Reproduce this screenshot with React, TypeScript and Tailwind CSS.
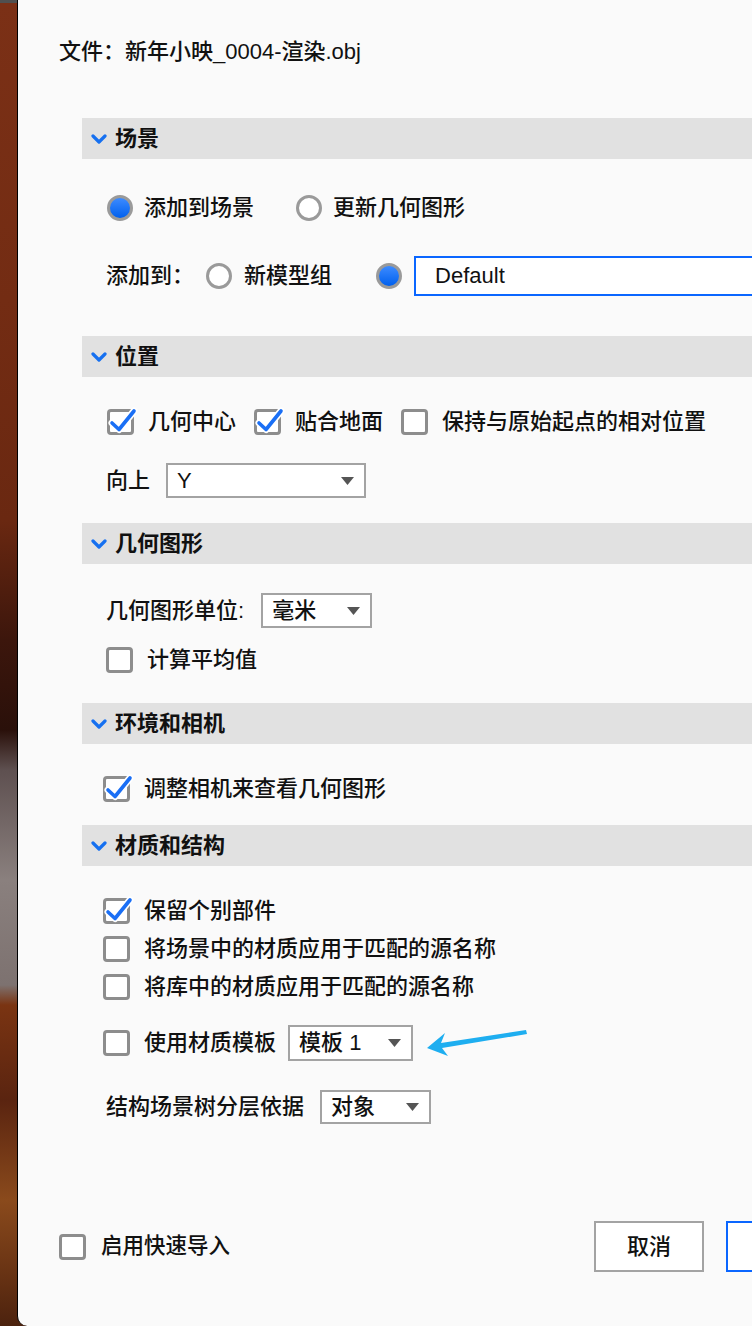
import React from 'react';

const FONT = "font-['Liberation_Sans','Noto_Sans_CJK_SC',sans-serif]";

function Chevron() {
  return (
    <svg width="16" height="10" viewBox="0 0 16 10" className="shrink-0">
      <polyline points="2,2 8,8 14,2" fill="none" stroke="#1670f0" strokeWidth="3.2" strokeLinecap="round" strokeLinejoin="round" />
    </svg>
  );
}

function Radio({ on }: { on?: boolean }) {
  return (
    <span
      className={
        on
          ? 'block w-[26px] h-[26px] shrink-0 rounded-full border-[3px] border-[#9a9a9a] bg-[linear-gradient(to_bottom,#3d8bff,#0060ee)]'
          : 'block w-[26px] h-[26px] shrink-0 rounded-full border-[3px] border-[#9a9a9a] bg-white'
      }
    />
  );
}

function Check({ on }: { on?: boolean }) {
  return (
    <span className="relative block w-[27px] h-[26px] shrink-0 rounded-[4px] border-[3px] border-[#8d8d8d] bg-white">
      {on && (
        <svg width="32" height="30" viewBox="0 0 32 30" className="absolute left-[-3px] top-[-3px] overflow-visible">
          <path d="M5 14 L12 20.5 L27 2" fill="none" stroke="#ffffff" strokeWidth="7" strokeLinecap="round" strokeLinejoin="round" />
          <path d="M5 14 L12 20.5 L27 2" fill="none" stroke="#1a6ff5" strokeWidth="3.6" strokeLinecap="round" strokeLinejoin="round" />
        </svg>
      )}
    </span>
  );
}

function Select({ value, w, h = 'h-[35px]' }: { value: string; w: string; h?: string }) {
  return (
    <div className={`${w} ${h} shrink-0 flex items-center justify-between border-2 border-[#a3a3a3] bg-white pl-[9px] pr-[10px]`}>
      <span className="text-[22px] leading-none text-[#111]">{value}</span>
      <svg width="13" height="8" viewBox="0 0 13 8">
        <polygon points="0,0 13,0 6.5,8" fill="#555" />
      </svg>
    </div>
  );
}

function SectionHeader({ title }: { title: string }) {
  return (
    <div className="h-[41px] flex items-center bg-[#e1e1e1] pl-[9px]">
      <Chevron />
      <span className="ml-[8px] text-[22px] leading-none font-bold text-[#111]">{title}</span>
    </div>
  );
}

function CheckRow({ on, label }: { on?: boolean; label: string }) {
  return (
    <div className="h-[28px] flex items-center">
      <Check on={on} />
      <span className="ml-[14px] shrink-0 text-[22px] leading-none">{label}</span>
    </div>
  );
}

export default function App() {
  return (
    <div className={`${FONT} font-medium whitespace-nowrap w-[752px] h-[1326px] overflow-hidden bg-[linear-gradient(to_bottom,#505050_0px,#505050_3px,#7b3016_3px,#732c13_300px,#6a2811_520px,#3c160c_640px,#2a100a_730px,#5e5050_770px,#8a807e_880px,#7d7270_985px,#7a3412_1005px,#5a2410_1100px,#8a4a1c_1200px,#6a3414_1270px,#4c220e_1326px)] text-[#111]`}>
      <div className="ml-[17px] h-full w-[840px] border-l border-black bg-[#fafafa] rounded-bl-[10px] flex flex-col">
        <div className="pt-[38px] pl-[41px] h-[66px] text-[22px] leading-[28px]">文件：新年小映_0004-渲染.obj</div>

        <div className="mt-[52px] ml-[64px]">
          {/* 场景 */}
          <SectionHeader title="场景" />
          <div className="pt-[35px] pb-[40px] pl-[25px]">
            <div className="h-[28px] flex items-center">
              <Radio on />
              <span className="ml-[11px] shrink-0 text-[22px] leading-none">添加到场景</span>
              <span className="ml-[42px]"><Radio /></span>
              <span className="ml-[11px] shrink-0 text-[22px] leading-none">更新几何图形</span>
            </div>
            <div className="mt-[34px] h-[40px] flex items-center -ml-px">
              <span className="shrink-0 text-[22px] leading-none">添加到：</span>
              <span className="ml-[12px]"><Radio /></span>
              <span className="ml-[12px] shrink-0 text-[22px] leading-none">新模型组</span>
              <span className="ml-[44px]"><Radio on /></span>
              <div className="ml-[12px] w-[400px] h-[40px] shrink-0 flex items-center border-2 border-[#0a66ff] bg-white pl-[19px]">
                <span className="text-[22px] leading-none">Default</span>
              </div>
            </div>
          </div>

          {/* 位置 */}
          <SectionHeader title="位置" />
          <div className="pt-[31px] pb-[25px] pl-[25px]">
            <div className="h-[28px] flex items-center">
              <Check on />
              <span className="ml-[14px] shrink-0 text-[22px] leading-none">几何中心</span>
              <span className="ml-[18px]"><Check on /></span>
              <span className="ml-[14px] shrink-0 text-[22px] leading-none">贴合地面</span>
              <span className="ml-[18px]"><Check /></span>
              <span className="ml-[14px] shrink-0 text-[22px] leading-none">保持与原始起点的相对位置</span>
            </div>
            <div className="mt-[27px] h-[35px] flex items-center -ml-px">
              <span className="shrink-0 text-[22px] leading-none">向上</span>
              <span className="ml-[16px]"><Select value="Y" w="w-[200px]" /></span>
            </div>
          </div>

          {/* 几何图形 */}
          <SectionHeader title="几何图形" />
          <div className="pt-[29px] pb-[29px] pl-[24px]">
            <div className="h-[35px] flex items-center">
              <span className="shrink-0 text-[22px] leading-none">几何图形单位:</span>
              <span className="ml-[17px]"><Select value="毫米" w="w-[111px]" /></span>
            </div>
            <div className="mt-[18px]">
              <CheckRow label="计算平均值" />
            </div>
          </div>

          {/* 环境和相机 */}
          <SectionHeader title="环境和相机" />
          <div className="pt-[31px] pb-[22px] pl-[21px]">
            <CheckRow on label="调整相机来查看几何图形" />
          </div>

          {/* 材质和结构 */}
          <SectionHeader title="材质和结构" />
          <div className="pt-[31px] pl-[21px]">
            <div className="flex flex-col gap-[10px]">
              <CheckRow on label="保留个别部件" />
              <CheckRow label="将场景中的材质应用于匹配的源名称" />
              <CheckRow label="将库中的材质应用于匹配的源名称" />
            </div>
            <div className="mt-[24px] h-[36px] flex items-center">
              <Check />
              <span className="ml-[14px] shrink-0 text-[22px] leading-none">使用材质模板</span>
              <span className="ml-[12px]"><Select value="模板 1" w="w-[125px]" h="h-[36px]" /></span>
              <svg width="104" height="32" viewBox="0 0 104 32" className="ml-[13px] shrink-0">
                <polygon points="1,21 19,6 15,16 100,3 101,7 16,21 22,29" fill="#1eaef0" />
              </svg>
            </div>
            <div className="mt-[29px] h-[34px] flex items-center pl-[3px]">
              <span className="shrink-0 text-[22px] leading-none">结构场景树分层依据</span>
              <span className="ml-[16px]"><Select value="对象" w="w-[111px]" h="h-[34px]" /></span>
            </div>
          </div>
        </div>

        {/* footer */}
        <div className="mt-[97px] h-[51px] flex items-center pl-[41px]">
          <Check />
          <span className="ml-[15px] shrink-0 text-[21.5px] leading-none">启用快速导入</span>
          <button className="ml-[364px] w-[110px] h-[51px] shrink-0 border-2 border-[#a3a3a3] bg-white text-[22px] leading-none">取消</button>
          <button className="ml-[22px] w-[140px] h-[51px] shrink-0 border-2 border-[#0a66ff] bg-white" />
        </div>
      </div>
    </div>
  );
}
